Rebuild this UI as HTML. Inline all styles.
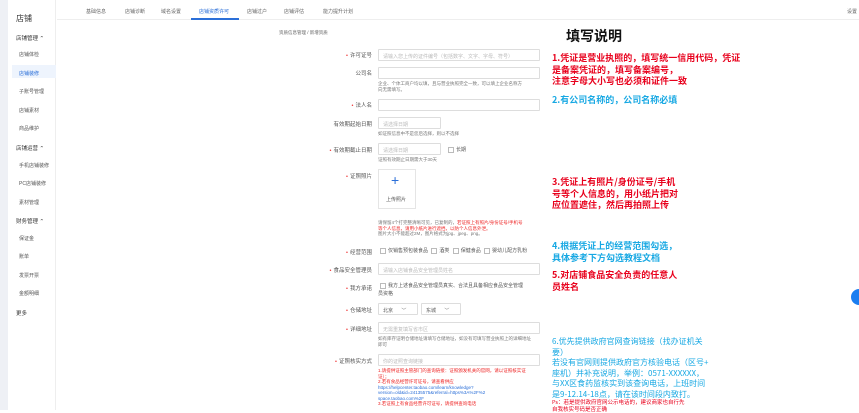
<!DOCTYPE html>
<html><head><meta charset="utf-8">
<style>
*{margin:0;padding:0;box-sizing:border-box}
body{width:859px;height:410px;overflow:hidden;background:#fff;font-family:"Liberation Sans","Noto Sans CJK SC",sans-serif;position:relative;color:#333}
.a{position:absolute;white-space:nowrap}
.side{position:absolute;left:0;top:0;width:8px;height:410px;background:#eef0f5}
.sb{position:absolute;left:8px;top:0;width:48px;height:410px;background:#fff;border-right:1px solid #eee}
.sb div{position:absolute;font-size:5px;color:#555}
.sb .g{font-size:5.5px;color:#333}
.tabs{position:absolute;left:57px;top:0;width:802px;height:20px;border-bottom:1px solid #eee}
.tabs span{position:absolute;top:8px;font-size:5px;color:#666}
.lab{position:absolute;font-size:5.5px;color:#555;text-align:right;width:120px;left:252px}
.lab i{color:#e33;font-style:normal;margin-right:2px}
.inp{position:absolute;border:1px solid #ddd;height:12px;font-size:5px;color:#bbb;padding:3px 4px;border-radius:1px}
.h{position:absolute;font-size:4.5px;color:#777;line-height:5.5px}
.r{color:#e22}
.n{position:absolute;left:552px;font-size:9px;font-weight:bold;line-height:12px;font-family:"Noto Sans CJK SC",sans-serif;white-space:nowrap}
.red{color:#e8001c}.blu{color:#17a8e3}
.cb{display:inline-block;width:6px;height:6px;border:1px solid #bbb;vertical-align:middle;margin:0 2px}
</style></head><body>
<div class="side"></div>
<div class="sb">
<div class="g" style="left:8px;top:13px;font-size:8px">店铺</div>
<div class="g" style="left:8px;top:34px">店铺管理 ⌃</div>
<div style="left:11px;top:51px">店铺体检</div>
<div style="left:4px;top:65px;width:44px;height:13px;background:#eef4fd"></div>
<div style="left:11px;top:70px;color:#2b6fd8">店铺装修</div>
<div style="left:11px;top:88px">子账号管理</div>
<div style="left:11px;top:107px">店铺素材</div>
<div style="left:11px;top:125px">商品维护</div>
<div class="g" style="left:8px;top:144px">店铺运营 ⌃</div>
<div style="left:11px;top:162px">手机店铺装修</div>
<div style="left:11px;top:180px">PC店铺装修</div>
<div style="left:11px;top:199px">素材管理</div>
<div class="g" style="left:8px;top:217px">财务管理 ⌃</div>
<div style="left:11px;top:235px">保证金</div>
<div style="left:11px;top:253px">账单</div>
<div style="left:11px;top:272px">发票开票</div>
<div style="left:11px;top:290px">金额明细</div>
<div class="g" style="left:8px;top:309px">更多</div>
</div>
<div class="tabs">
<span style="left:29px">基础信息</span><span style="left:68px">店铺诊断</span><span style="left:104px">域名设置</span>
<span style="left:142px;color:#2b6fd8">店铺资质许可</span><span style="left:190px">店铺过户</span><span style="left:227px">店铺评估</span><span style="left:266px">能力提升计划</span>
<div style="position:absolute;left:134px;top:18px;width:48px;height:2px;background:#2b6fd8"></div>
<span style="left:790px">设置</span>
</div>
<div class="a" style="left:279px;top:30px;font-size:4.5px;color:#666">资质信息管理 / 新增资质</div>

<div class="lab" style="top:51px"><i>•</i>许可证号</div>
<div class="inp" style="left:378px;top:49px;width:162px">请输入您上传的证件编号（包括数字、文字、字母、符号）</div>
<div class="lab" style="top:69px">公司名</div>
<div class="inp" style="left:378px;top:67px;width:162px"></div>
<div class="h" style="left:378px;top:81px">企业、个体工商户均以填，且与营业执照完全一致，可以填上企业名称方<br>向无需填写。</div>
<div class="lab" style="top:101px"><i>•</i>法人名</div>
<div class="inp" style="left:378px;top:99px;width:162px"></div>
<div class="lab" style="top:120px">有效期起始日期</div>
<div class="inp" style="left:378px;top:117px;width:63px">请选择日期</div>
<div class="h" style="left:378px;top:131px">如证照信息中不是您后选择，则以不选择</div>
<div class="lab" style="top:146px"><i>•</i>有效期截止日期</div>
<div class="inp" style="left:378px;top:143px;width:63px">请选择日期</div>
<div class="a" style="left:446px;top:146px;font-size:5px;color:#555"><span class="cb"></span>长期</div>
<div class="h" style="left:378px;top:157px">证照有效期止日期需大于30天</div>
<div class="lab" style="top:172px"><i>•</i>证照照片</div>
<div style="position:absolute;left:378px;top:169px;width:38px;height:40px;border:1px solid #e5e5e5"></div>
<div class="a" style="left:391px;top:172px;font-size:14px;color:#2b6fd8;font-weight:200">+</div>
<div class="a" style="left:386px;top:196px;font-size:5px;color:#555">上传照片</div>
<div class="h" style="left:378px;top:220px">请保留4个打完整清晰可见，已复制的，<span class="r">若证照上有照片/身份证号/手机号</span><br><span class="r">等个人信息，请用小纸片进行遮挡，以防个人信息外泄。</span><br>图片大小不能超过2M，图片格式为jpg、jpeg、png。</div>
<div class="lab" style="top:248px"><i>•</i>经营范围</div>
<div class="a" style="left:378px;top:247px;font-size:5px;color:#555"><span class="cb"></span>仅销售预包装食品 <span class="cb"></span>酒类 <span class="cb"></span>保健食品 <span class="cb"></span>婴幼儿配方乳粉</div>
<div class="lab" style="top:266px"><i>•</i>食品安全管理员</div>
<div class="inp" style="left:378px;top:263px;width:162px">请输入店铺食品安全管理员姓名</div>
<div class="lab" style="top:284px"><i>•</i>我方承诺</div>
<div class="a" style="left:378px;top:282px;font-size:5px;color:#555;line-height:8px"><span class="cb"></span>我方上述食品安全管理员真实、合法且具备相应食品安全管理<br>员资格</div>
<div class="lab" style="top:306px"><i>•</i>仓储地址</div>
<div class="inp" style="left:378px;top:303px;width:40px;color:#555">北京 &nbsp; &nbsp; &nbsp;﹀</div>
<div class="inp" style="left:421px;top:303px;width:40px;color:#555">东城 &nbsp; &nbsp; &nbsp;﹀</div>
<div class="lab" style="top:325px"><i>•</i>详细地址</div>
<div class="inp" style="left:378px;top:322px;width:162px">无需重复填写省市区</div>
<div class="h" style="left:378px;top:336px">如有库存证明仓储地址请填写仓储地址，如没有可填写营业执照上的详细地址<br>即可</div>
<div class="lab" style="top:357px"><i>•</i>证照核实方式</div>
<div class="inp" style="left:378px;top:354px;width:162px">你的证照查询链接</div>
<div class="h" style="left:378px;top:368px;color:#e22">1.请提供证照主管部门的查询链接：证照颁发机关的官网，请以证照核实证<br>证）；<br>2.若有食品经营许可证号，请查看供应<br><span style="color:#2b6fd8">https://helpcenter.taobao.com/learn/knowledge?<br>version=old&amp;id=24135575&amp;referral=https%3A%2F%2<br>space.taobao.com%2F</span><br>3.若证照上有食品经营许可证号，请提供查询电话</div>

<div class="a" style="left:566px;top:26px;font-size:14px;font-weight:bold;color:#111;font-family:'Noto Sans CJK SC',sans-serif">填写说明</div>
<div class="n red" style="top:52px;line-height:11.5px">1.凭证是营业执照的，填写统一信用代码，凭证<br>是备案凭证的，填写备案编号，<br>注意字母大小写也必须和证件一致</div>
<div class="n blu" style="top:94px">2.有公司名称的，公司名称必填</div>
<div class="n red" style="top:176px;line-height:11.5px">3.凭证上有照片/身份证号/手机<br>号等个人信息的，用小纸片把对<br>应位置遮住，然后再拍照上传</div>
<div class="n blu" style="top:240px;line-height:11.5px">4.根据凭证上的经营范围勾选，<br>具体参考下方勾选教程文档</div>
<div class="n red" style="top:269px;line-height:11.5px">5.对店铺食品安全负责的任意人<br>员姓名</div>
<div class="n blu" style="top:337px;font-weight:normal;font-size:8px;line-height:10.5px">6.优先提供政府官网查询链接（找办证机关<br>要）<br>若没有官网则提供政府官方核验电话（区号+<br>座机）并补充说明，举例：0571-XXXXXX，<br>与XX区食药监核实到该查询电话，上班时间<br>是9-12.14-18点，请在该时间段内致打。</div>
<div class="n red" style="top:399px;font-size:5.5px;font-weight:normal;line-height:6.5px">Ps：若是提供政府官网公示电话的，建议商家也自行先<br>自我核实号码是否正确</div>
<div style="position:absolute;left:851px;top:289px;width:16px;height:16px;border-radius:50%;background:#1b7ef0"></div>
</body></html>
